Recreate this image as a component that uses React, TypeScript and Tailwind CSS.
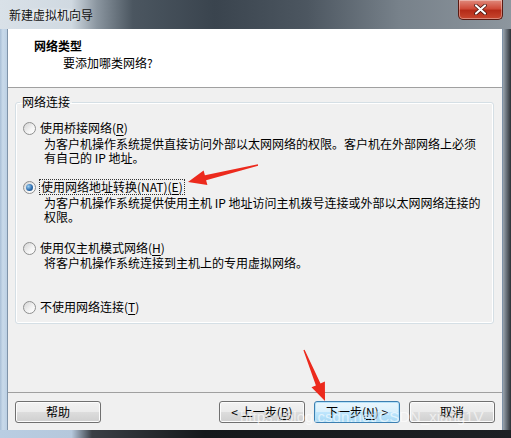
import React from "react";

function Radio({ checked }: { checked?: boolean }) {
  return (
    <span className="relative inline-flex h-[13px] w-[13px] shrink-0 items-center justify-center rounded-full border border-[#8e8f8f] bg-[linear-gradient(135deg,#d4d4d4,#f4f4f4_60%,#ffffff)]">
      {checked && (
        <span className="h-[7px] w-[7px] rounded-full bg-[radial-gradient(circle_at_35%_35%,#9dd0f3,#2f6fb0_55%,#173f6c)]" />
      )}
    </span>
  );
}

function Key({ k }: { k: string }) {
  return <span className="underline underline-offset-2">{k}</span>;
}

function WinButton({ children, primary }: { children: React.ReactNode; primary?: boolean }) {
  return (
    <button
      className={
        primary
          ? "h-[22px] w-[86px] rounded-[3px] border border-[#3c7fb1] bg-[linear-gradient(#eaf6fd,#d9f0fc_50%,#bee6fd_51%,#a7d9f5)] text-[12px] leading-none text-black shadow-[inset_0_0_0_1px_#b5e2f9]"
          : "h-[22px] w-[86px] rounded-[3px] border border-[#707070] bg-[linear-gradient(#f2f2f2,#ebebeb_50%,#dddddd_51%,#cfcfcf)] text-[12px] leading-none text-black shadow-[inset_0_0_0_1px_#fcfcfc]"
      }
    >
      {children}
    </button>
  );
}

export default function App() {
  return (
    <div className="relative flex h-[438px] w-[511px] flex-col overflow-hidden bg-[#2a2f35] font-['Noto_Sans_CJK_SC','Microsoft_YaHei',sans-serif] text-[12px] text-black">
      {/* title bar */}
      <div className="relative flex h-[29px] items-center bg-[linear-gradient(90deg,#d9e1e8_0%,#d0d9e1_14%,#8a959f_19%,#4b5660_26%,#3a444e_42%,#4c5660_60%,#77818a_78%,#8d969e_100%)] pl-[7px]">
        <span className="rounded-full bg-[radial-gradient(ellipse,rgba(255,255,255,0.7),rgba(255,255,255,0)_70%)] px-[2px] leading-[16px] text-[#111]">
          新建虚拟机向导
        </span>
        <div className="absolute right-[8px] top-0 flex h-[20px] w-[45px] items-center justify-center rounded-b-[5px] border border-t-0 border-[#5a1a12] bg-[linear-gradient(#e08a7c,#cf4b39_45%,#b52b18_55%,#c8472f)] shadow-[inset_0_0_0_1px_rgba(255,255,255,0.35)]">
          <svg width="13" height="11" viewBox="0 0 13 11">
            <path d="M2 1.5 L11 9.5 M11 1.5 L2 9.5" stroke="#3a0d08" strokeWidth="3.6" strokeLinecap="round" />
            <path d="M2 1.5 L11 9.5 M11 1.5 L2 9.5" stroke="#ffffff" strokeWidth="2.2" strokeLinecap="round" />
          </svg>
        </div>
      </div>

      <div className="flex flex-1">
        {/* left frame */}
        <div className="w-[7px] bg-[linear-gradient(90deg,#a9bfd6,#c9daea_40%,#bcd0e4)]" />

        {/* client area */}
        <div className="flex flex-1 flex-col border-x border-[#7f93a8] bg-[#f0f0f0]">
          <div className="h-[59px] border-b border-[#a0a0a0] bg-white pl-[26px] pt-[9px]">
            <div className="text-[12px] font-bold leading-[16px]">网络类型</div>
            <div className="mt-[1px] pl-[29px] leading-[16px]">要添加哪类网络?</div>
          </div>

          <div className="flex-1 pl-[7px] pr-[8px] pt-[7px]">
            <fieldset className="rounded-[3px] border border-[#d5dfe5] pb-[8px] shadow-[inset_0_0_0_1px_#ffffff]">
              <legend className="ml-[4px] px-[2px] leading-[14px]">网络连接</legend>

              <div className="mt-[11px] flex items-center gap-[4px] pl-[7px] leading-[16px]">
                <Radio />
                <span>
                  使用桥接网络(<Key k="R" />)
                </span>
              </div>
              <div className="mt-[1px] pl-[28px] leading-[14px]">
                为客户机操作系统提供直接访问外部以太网网络的权限。客户机在外部网络上必须
                <br />
                有自己的 IP 地址。
              </div>

              <div className="mt-[14px] flex items-center gap-[3px] pl-[7px] leading-[16px]">
                <Radio checked />
                <span className="border border-dotted border-[#333] px-[1px] leading-[14px]">
                  使用网络地址转换(NAT)(<Key k="E" />)
                </span>
              </div>
              <div className="mt-[1px] pl-[28px] leading-[14px]">
                为客户机操作系统提供使用主机 IP 地址访问主机拨号连接或外部以太网网络连接的
                <br />
                权限。
              </div>

              <div className="mt-[16px] flex items-center gap-[4px] pl-[7px] leading-[16px]">
                <Radio />
                <span>
                  使用仅主机模式网络(<Key k="H" />)
                </span>
              </div>
              <div className="pl-[28px] leading-[14px]">将客户机操作系统连接到主机上的专用虚拟网络。</div>

              <div className="mt-[29px] flex items-center gap-[4px] pl-[7px] leading-[16px]">
                <Radio />
                <span>
                  不使用网络连接(<Key k="T" />)
                </span>
              </div>
            </fieldset>
          </div>

          <div className="flex border-t border-[#a0a0a0] px-[7px] pb-[7px] pt-[8px]">
            <WinButton>帮助</WinButton>
            <div className="ml-auto flex gap-[9px]">
              <WinButton>
                &lt; 上一步(<Key k="B" />)
              </WinButton>
              <WinButton primary>
                下一步(<Key k="N" />) &gt;
              </WinButton>
              <WinButton>取消</WinButton>
            </div>
          </div>
        </div>

        {/* right frame */}
        <div className="w-[8px] bg-[linear-gradient(90deg,#9aa4ad,#6d767f_40%,#2c3136)]" />
      </div>

      {/* bottom frame */}
      <div className="h-[8px] bg-[linear-gradient(90deg,#b9cde2_0%,#b5c8dc_14%,#3a3f45_18%,#15181b_40%,#1d2024_100%)]" />

      {/* annotation arrows */}
      <svg className="pointer-events-none absolute inset-0" width="511" height="438" viewBox="0 0 511 438">
        <polygon
          points="257.9,164.3 204.9,175.3 203.6,170.6 188,182 207.4,184.9 206.1,180.2 258.1,165.7"
          fill="#ec2a1d"
        />
        <polygon
          points="303.4,350.2 315.9,385.4 311.5,387.3 325,401 324.9,381.5 320.5,383.5 304.6,349.8"
          fill="#ec2a1d"
        />
      </svg>

      <span className="pointer-events-none absolute left-[240px] top-[408px] font-['Liberation_Sans',sans-serif] text-[15px] leading-[18px] text-white/60">
        https://blog.csdn.net/CSDN_xiang1V
      </span>
    </div>
  );
}
